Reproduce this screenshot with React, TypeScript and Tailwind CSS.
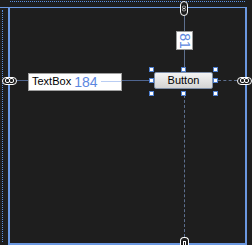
import React from 'react';

const font = { fontFamily: '"Liberation Sans", "Noto Sans", sans-serif' };

// little chain-link glyph drawn on the anchor pills
const Link: React.FC<{ vertical?: boolean }> = ({ vertical }) => (
  <svg width="9" height="5" viewBox="0 0 9 5" className={vertical ? 'rotate-90' : ''}>
    <rect x="0.5" y="0.5" width="4" height="4" rx="1.5" fill="none" stroke="#fff" strokeWidth="1" />
    <rect x="4.5" y="0.5" width="4" height="4" rx="1.5" fill="none" stroke="#fff" strokeWidth="1" />
  </svg>
);

const Handle: React.FC = () => <div className="relative z-10 w-[5px] h-[5px] bg-white border border-[#4e7fd0]" />;

const Pill: React.FC<{ vertical?: boolean }> = ({ vertical }) => (
  <div
    className={
      vertical
        ? 'w-[8px] h-[15px] shrink-0 rounded-[4px] border border-white bg-[#1e1e1e] flex items-center justify-center'
        : 'w-[15px] h-[8px] shrink-0 rounded-[4px] border border-white bg-[#1e1e1e] flex items-center justify-center'
    }
  >
    <Link vertical={vertical} />
  </div>
);

const App: React.FC = () => {
  return (
    <div className="relative w-[252px] h-[245px] bg-[#1e1e1e] overflow-hidden" style={font}>
      {/* dotted outer margins */}
      <div className="absolute left-[10px] top-[1px] w-[235px] border-t border-dotted border-[#5a8fe0]" />
      <div className="absolute left-[2px] top-[10px] h-[232px] border-l border-dotted border-[#5a8fe0]" />

      {/* grid bounds */}
      <div className="absolute left-0 top-[7px] w-[247px] h-px bg-[#6b98e0]" />
      <div className="absolute left-[8px] top-[7px] w-[239px] h-[238px] border-l-2 border-r-2 border-b-2 border-[#6b98e0]" />

      {/* vertical guide through the button */}
      <div className="absolute left-[180px] top-[1px] w-[9px] h-[244px] flex flex-col items-center">
        <div className="self-start">
          <Pill vertical />
        </div>
        <div className="w-px h-[15px] bg-[#5d6f8e] -ml-px" />
        <div className="w-[17px] h-[19px] shrink-0 bg-white border border-[#9a9a9a] flex items-center justify-center">
          <span className="rotate-90 text-[14px] leading-none text-[#5c87e0]">81</span>
        </div>
        <div className="w-px h-[19px] bg-[#5d6f8e] -ml-px" />
        <div className="h-[26px] shrink-0" />
        <div className="flex-1 border-l border-dashed border-[#5d6f8e] -ml-px" />
        <div className="w-[9px] h-[8px] shrink-0 rounded-t-[4px] border border-b-0 border-white bg-[#1e1e1e] flex items-end justify-center">
          <div className="w-[3px] h-[4px] border border-b-0 border-white" />
        </div>
      </div>

      {/* row: anchor, TextBox, Button, anchor */}
      <div className="absolute left-[2px] top-[67px] w-[250px] h-[29px] flex items-center">
        <div className="-mt-[2px]">
          <Pill />
        </div>
        <div className="w-[11px] h-px bg-[#4f6590] -mt-[2px]" />
        <div className="w-[94px] h-[18px] shrink-0 bg-white border border-[#a0a0a0] flex items-center pl-[3px]">
          <span className="text-[11px] leading-none text-black">TextBox</span>
          <span className="ml-[3px] text-[14px] leading-none text-[#5c87e0]">184</span>
          <div className="flex-1 h-px bg-[#b9cdf3] ml-[3px] -mt-[1px]" />
        </div>
        <div className="w-[27px] h-px bg-[#4f6590] -mt-[2px]" />

        {/* selected Button with its handles */}
        <div className="relative w-[69px] h-[29px] shrink-0 flex flex-col justify-between">
          <div className="flex justify-between">
            <Handle />
            <Handle />
            <Handle />
          </div>
          <div className="flex justify-between -mt-[2px]">
            <Handle />
            <Handle />
          </div>
          <div className="flex justify-between">
            <Handle />
            <Handle />
            <Handle />
          </div>
          <div className="absolute left-[5px] top-[5px] w-[59px] h-[17px] border border-[#7f8fa8] rounded-[2px] bg-gradient-to-b from-[#f4f4f4] to-[#d4d4d4] flex items-center justify-center">
            <span className="text-[11px] leading-none text-black">Button</span>
          </div>
        </div>

        <div className="w-[19px] border-t border-dashed border-[#5d6f8e] -mt-[2px]" />
        <div className="-mt-[2px]">
          <Pill />
        </div>
      </div>
    </div>
  );
};

export default App;
